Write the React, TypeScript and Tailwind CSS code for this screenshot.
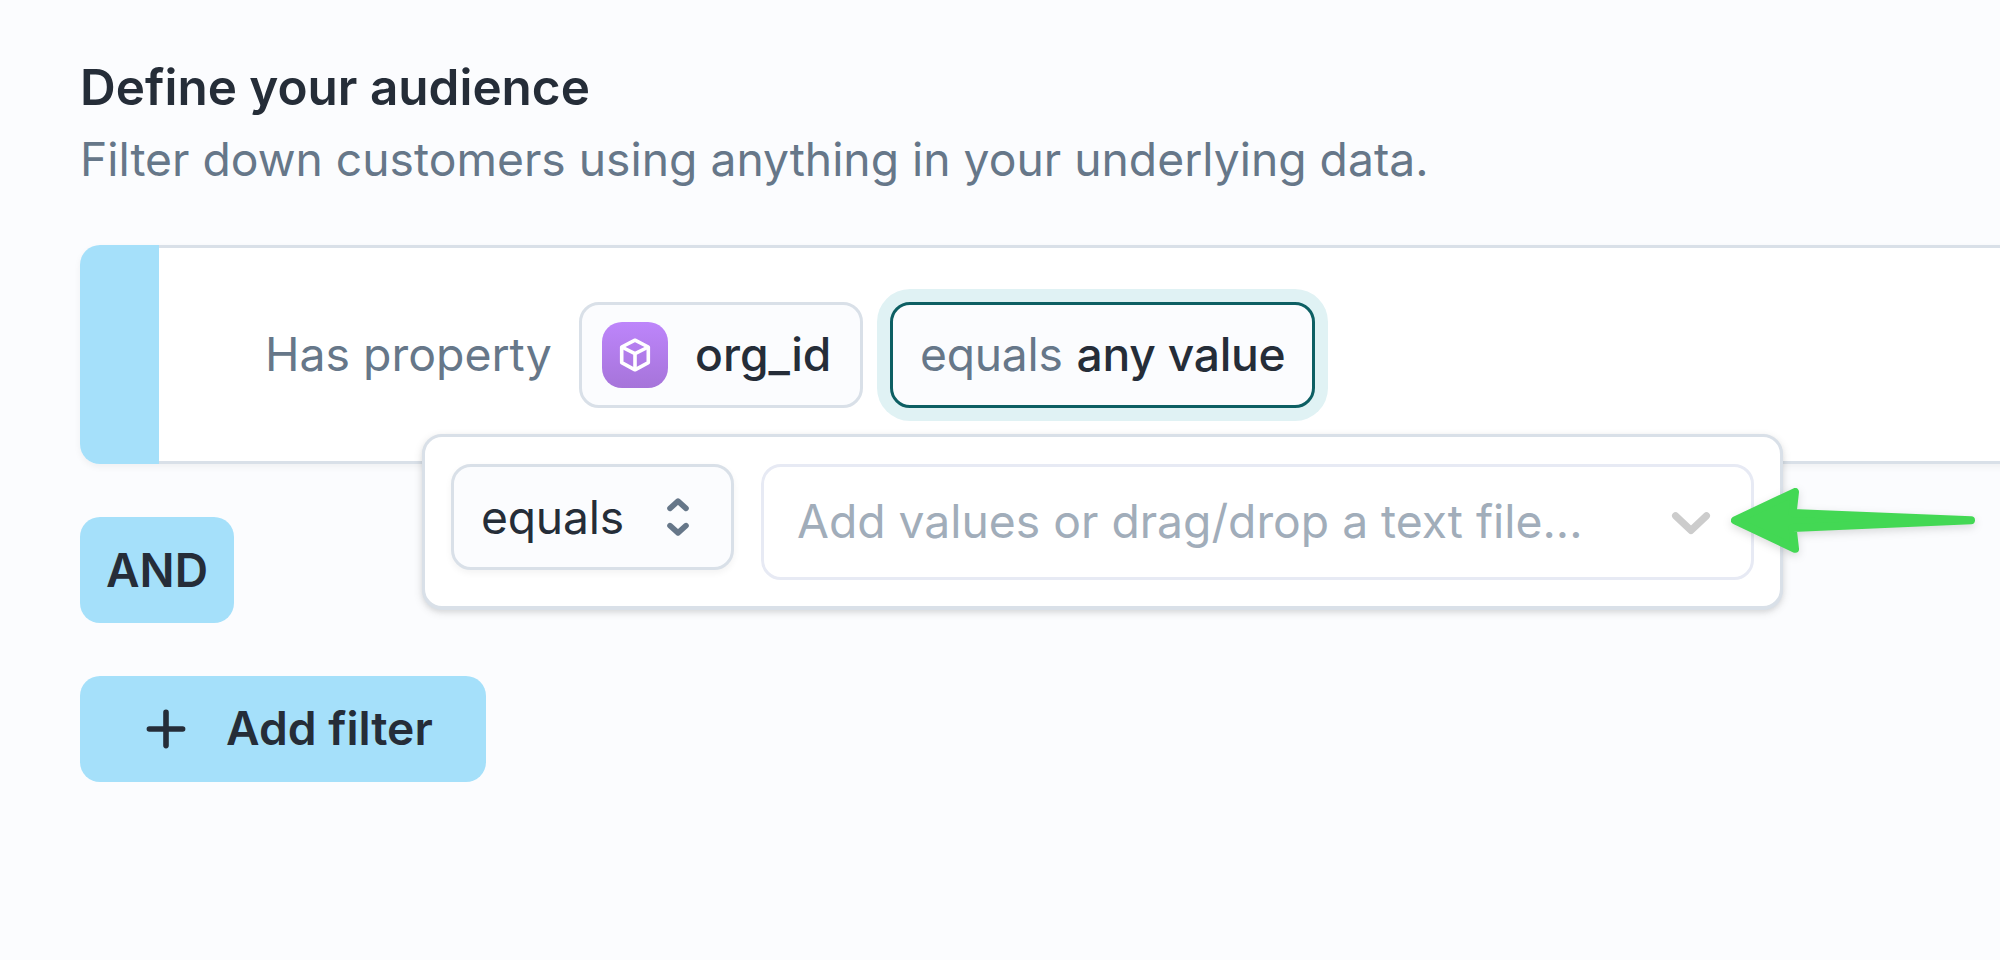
import type { ReactNode } from 'react'

interface ChipProps {
  children: ReactNode
  className?: string
}

function Chip({ children, className = '' }: ChipProps) {
  return (
    <button
      className={`flex h-[106px] items-center rounded-[20px] border-[3px] bg-[#fbfcfe] text-[46.2px] whitespace-nowrap ${className}`}
      type="button"
    >
      {children}
    </button>
  )
}

function CubeIcon() {
  return (
    <span className="flex size-[66px] shrink-0 items-center justify-center rounded-[20px] bg-linear-to-b from-[#bd85fb] to-[#a674da]">
      <svg
        className="size-[34px]"
        fill="none"
        stroke="#fff"
        strokeLinejoin="round"
        strokeWidth="3.6"
        viewBox="0 0 34 34"
      >
        <path d="M17 2.2 30.3 9v15.6L17 31.8 3.7 24.6V9z" />
        <path d="M3.7 9 17 15.6 30.3 9M17 15.6v16" />
      </svg>
    </span>
  )
}

function SelectorIcon() {
  return (
    <svg
      className="h-[38px] w-[22px]"
      fill="none"
      stroke="#667789"
      strokeLinecap="round"
      strokeLinejoin="round"
      strokeWidth="5.6"
      viewBox="0 0 22 38"
    >
      <path d="M3 10.4 11 3.2l8 7.2M3 27.6 11 34.8l8-7.2" />
    </svg>
  )
}

function ChevronIcon() {
  return (
    <svg
      className="h-[24px] w-[40px] translate-y-px"
      fill="none"
      stroke="#cccccc"
      strokeLinecap="round"
      strokeLinejoin="round"
      strokeWidth="7.2"
      viewBox="0 0 40 24"
    >
      <path d="M4.6 4.8 20 19.4 35.4 4.8" />
    </svg>
  )
}

function PlusIcon() {
  return (
    <svg
      className="size-[40px]"
      fill="none"
      stroke="#252d38"
      strokeLinecap="round"
      strokeWidth="5.6"
      viewBox="0 0 40 40"
    >
      <path d="M20 3.4v33.2M3.4 20h33.2" />
    </svg>
  )
}

function PointerArrow() {
  return (
    <svg
      className="absolute top-[478px] left-[1721px] h-[90px] w-[270px] drop-shadow-[0_3px_4px_rgba(0,0,0,0.14)]"
      fill="#43d854"
      stroke="#43d854"
      strokeLinejoin="round"
      strokeWidth="8"
      viewBox="0 0 270 90"
    >
      <path d="M14 42.3 74 14l-2.4 21L250 42.3 71.6 50 74 70.8z" />
    </svg>
  )
}

function ValuePopover() {
  return (
    <div className="absolute top-[434px] left-[422px] flex h-[175px] w-[1361px] items-start gap-[27px] rounded-[20px] border-[3px] border-[#d9e0e8] bg-white px-[26px] py-[27px] shadow-[0_1px_0_#d9e0e8,0_3px_10px_rgba(0,0,0,0.12),0_3px_5px_rgba(0,0,0,0.06)]">
      <Chip className="w-[283px] justify-between border-[#d9e0e8] pr-[42px] pl-[27px] tracking-[-0.2px] text-[#252d38] shadow-[0_3px_7px_rgba(0,0,0,0.05)]">
        <span className="translate-y-px">equals</span>
        <SelectorIcon />
      </Chip>
      <div className="flex h-[116px] flex-1 items-center justify-between rounded-[20px] border-[3px] border-[#e7eaf4] pr-[40px] pl-[33px] text-[46.25px] text-[#a1adba]">
        <span className="whitespace-nowrap">Add values or drag/drop a text file...</span>
        <ChevronIcon />
      </div>
    </div>
  )
}

export default function App() {
  return (
    <main className="relative h-[960px] w-[2000px] overflow-hidden bg-[#fbfcfe] pt-[55px] pl-[80px] font-['Inter',sans-serif]">
      <h1 className="h-[64px] text-[49.45px] leading-[64px] font-semibold text-[#252d38]">
        <span>Define your audience</span>
      </h1>
      <p className="mt-[8px] h-[64px] text-[46.25px] leading-[64px] text-[#667789]">
        <span>Filter down customers using anything in your underlying data.</span>
      </p>

      <section className="mt-[54px] flex h-[219px] w-[2100px] rounded-[20px] shadow-[0_3px_7px_rgba(0,0,0,0.05)]">
        <div className="w-[79px] rounded-l-[20px] bg-[#a5e0fa]" />
        <div className="flex flex-1 items-center border-y-[3px] border-[#d9e0e8] bg-white pl-[106px]">
          <span className="w-[314px] text-[46.4px] whitespace-nowrap text-[#667789]">
            Has property
          </span>
          <Chip className="w-[284px] gap-[27px] border-[#d9e0e8] pl-[20px] font-medium text-[#252d38]">
            <CubeIcon />
            <span>org_id</span>
          </Chip>
          <Chip className="ml-[27px] w-[425px] gap-[14px] border-[#0d5f63] pl-[27px] tracking-[-0.25px] ring-[13px] ring-[#e0f2f4]">
            <span className="text-[#667789]">equals</span>
            <span className="font-medium text-[#252d38]">any value</span>
          </Chip>
        </div>
      </section>

      <div className="mt-[53px] flex flex-col items-start gap-[53px] text-[46.2px] font-semibold text-[#252d38]">
        <div className="flex h-[106px] w-[154px] items-center justify-center rounded-[20px] bg-[#a5e0fa]">
          <span className="translate-y-px">AND</span>
        </div>
        <button
          className="flex h-[106px] w-[406px] items-center gap-[40px] rounded-[20px] bg-[#a5e0fa] pl-[66px] whitespace-nowrap"
          type="button"
        >
          <PlusIcon />
          <span>Add filter</span>
        </button>
      </div>

      <ValuePopover />
      <PointerArrow />
    </main>
  )
}
